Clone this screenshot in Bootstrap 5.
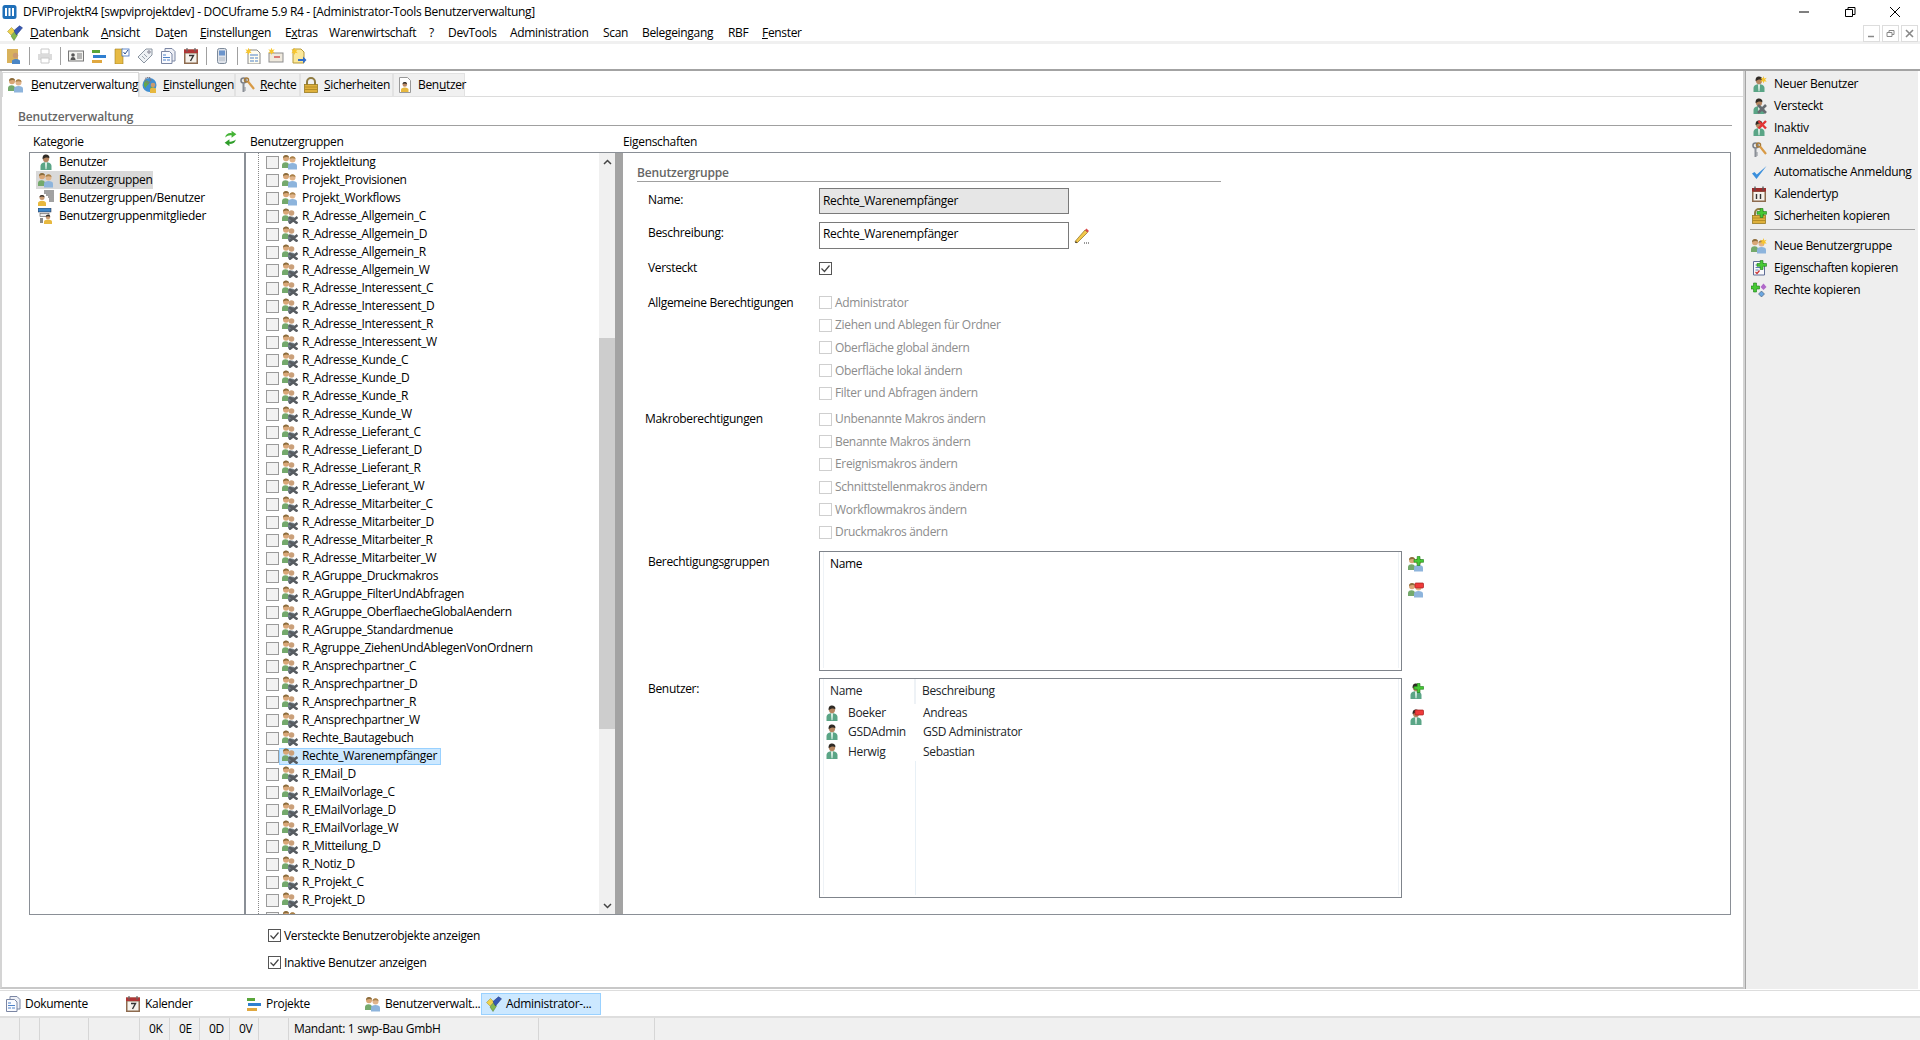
<!DOCTYPE html>
<html lang="de">
<head>
<meta charset="utf-8">
<title>DFViProjektR4</title>
<link href="https://cdn.jsdelivr.net/npm/bootstrap@5.3.0/dist/css/bootstrap.min.css" rel="stylesheet">
<style>
html,body{height:1040px;overflow:hidden;background:#fff}
body{font-family:"Open Sans","Liberation Sans",sans-serif;font-size:12px;line-height:16px;color:#000;letter-spacing:-.32px}
svg.ico{width:16px;height:16px;flex:none;display:block}
.app-win{height:1040px;width:1920px}
.ttl-bar{height:22px;padding-left:2px;padding-top:2px}
.ttl-bar .ttl-txt{margin-left:5px}
.ttl-btns{margin-left:auto;width:123px;justify-content:space-between;padding-right:18px}
.ttl-btns svg{width:14px;height:14px}
.mn-bar{height:19px;position:relative;padding-top:2px}
.mn-ico{width:30px;padding-left:7px}
.mn-items{display:grid;grid-template-columns:71px 54px 45px 85px 44px 100px 19px 62px 93px 39px 86px 34px auto;flex:1}
.mdi-btns{margin-left:auto;margin-right:2px;gap:2px;margin-top:2px}
.mdi-btns span{width:17px;height:17px;border:1px solid #ddd;display:flex;align-items:center;justify-content:center}
.mdi-btns svg{width:9px;height:9px}
.band-bar{height:3px;background:#f0f0f0}
.tool-bar{height:25px;padding-left:6px;padding-bottom:1px;gap:7px}
.tool-bar i{width:1px;height:18px;background:#a0a0a0;flex:none}
.tool-bar .fad{opacity:.35}
.rule-top{height:2px;background:#a3a3a3}
.work-row{height:918px}
.work-main{width:1745px;border-right:2px solid #d4d4d4;border-left:2px solid #d4d4d4;border-bottom:2px solid #c8c8c8}
.side-pane{width:173px;background:#eee;border-left:1px solid #a5a5a5;padding-top:2px}
.side-pane .list-group-item{background:transparent;border:0;padding:0 0 0 5px;height:22px;display:flex;align-items:center;gap:7px;color:#000}
.side-sep{height:1px;background:#a0a0a0;margin:2px 0 5px 4px;width:165px}
.tab-strip{height:26px;border-bottom:0;background:linear-gradient(#fff 1px,#fff 25px,#dcdcdc 25px);padding-top:1px;flex-wrap:nowrap}
.tab-strip .nav-link{color:#000;border-radius:0;padding:0 0 0 2px;height:24px;margin:1px 0 0;background:#f0f0f0;border:1px solid #e2e2e2;display:flex;align-items:center;gap:5px}
.tab-strip .nav-link.active{height:25px;margin-top:0;background:#fff;border-color:#d9d9d9 #d9d9d9 #fff;border-bottom:0;color:#000;padding-left:5px;gap:7px}
.tab-strip li:nth-child(1){width:137px}
.tab-strip li:nth-child(2){width:96px}
.tab-strip li:nth-child(3){width:65px}
.tab-strip li:nth-child(4){width:93px}
.tab-strip li:nth-child(5){width:72px}
.tab-strip li:nth-child(3) .nav-link,.tab-strip li:nth-child(5) .nav-link{padding-left:3px}
.page-pad{padding:0 11px 0 16px}
.hd-group{height:17px;margin-top:12px;border-bottom:1px solid #a0a0a0;color:#666;font-weight:600;line-height:15px;letter-spacing:-.15px}
.col-heads{height:26px;padding-left:15px;align-items:flex-end;padding-bottom:2px}
.col-heads span:nth-child(1){width:190px}
.col-heads svg{width:15px;height:17px;margin-right:12px;margin-bottom:3px}
.col-heads span:nth-child(3){width:373px}
.pane-row{height:763px;width:1702px;margin-left:27px;border:1px solid #8a8f96}
.cat-pane{width:216px;flex:none;border-right:2px solid #8a8f96;padding:0 0 0 6px}
.cat-item{height:18px;display:flex;align-items:center;gap:2px;width:117px}
.cat-item svg{margin:0 3px 0 2px}
.cat-item.sel{background:#d9d9d9}
.cat-item:nth-child(3),.cat-item:nth-child(4){width:180px}
.tree-pane{width:353px;overflow:hidden;position:relative;padding:0;margin:0;list-style:none;flex:none}
.tree-pane::before{content:"";position:absolute;left:12px;top:0;bottom:0;border-left:1px dotted #888}
.tr-row{height:18px;display:flex;align-items:center;padding-left:20px}
.tr-lbl{display:flex;align-items:center;height:17px;padding:0 3px 0 2px;gap:4px;border:1px solid transparent;white-space:nowrap}
.tr-row.sel .tr-lbl{background:#cce8ff;border-color:#99d1ff}
.scroll-v{width:16px;background:#f0f0f0;flex:none;display:flex;flex-direction:column}
.scroll-v b{height:17px;display:flex;align-items:center;justify-content:center;flex:none}
.scroll-v b svg{width:9px;height:6px}
.scroll-v em{display:block;height:392px;background:#cdcdcd;margin:168px 0 168px}
.split-v{width:8px;background:#a3a3a3;flex:none}
.prop-pane{flex:1;padding:0 0 0 14px;min-width:0}
.prop-hd{height:18px;margin-top:11px;width:584px;padding-top:2px;border-bottom:1px solid #a0a0a0;color:#666;font-weight:600;line-height:14px;letter-spacing:-.15px}
.form-check-input[type=checkbox]{border-radius:0;width:13px;height:13px;flex:none;margin:0;background-color:#f2f2f2;border:1px solid #9a9a9a;box-shadow:none}
.form-check-input[type=checkbox]:checked{background-color:#fff;border-color:#555;background-image:url("data:image/svg+xml,%3csvg xmlns='http://www.w3.org/2000/svg' viewBox='0 0 13 13'%3e%3cpath d='M2.500 6.500l3 3 5-6' fill='none' stroke='%23444' stroke-width='1.200'/%3e%3c/svg%3e");background-size:13px 13px}
.form-check-input[type=checkbox]:disabled{opacity:1;background-color:#fff;border-color:#cfcfcf}
.prop-row{display:grid;grid-template-columns:171px 1fr;padding-left:11px}
.in-name{margin-top:6px;height:26px}
.in-desc{margin-top:8px;height:27px}
.form-control.fld{border-radius:0;height:100%;width:250px;border:1px solid #7a7a7a;font-size:12px;padding:0 3px 5px;color:#000;background:#fff;box-shadow:none;line-height:16px;letter-spacing:-.32px}
.form-control.fld[readonly]{background:#e6e6e6;border-color:#7a7a7a;padding-bottom:1px}
.fld-wrap{display:flex;align-items:flex-start;gap:5px}
.fld-wrap svg{margin-top:6px}
.in-hid{margin-top:11px;height:14px;align-items:center}
.grp-a{margin-top:17.5px}
.grp-b{margin-top:3.500px}
.grp-b label.lb{margin-left:-3px}
.chk-ln{height:22.6px;display:flex;align-items:center;gap:3px;color:#8c8c8c}
.lb{padding-top:3px}
.in-name .lb{padding-top:4px}
.in-desc .lb{padding-top:3px}
.grp-a .lb{padding-top:0;margin-top:3px}
.box-a{margin-top:7px;height:120px}
.box-b{margin-top:7px;height:220px}
.box-inner{display:flex;gap:6px;height:100%}
.list-box{width:583px;height:100%;border:1px solid #7f848b;padding:0 2px 2px 3px}
.list-in{height:100%;border-left:1px solid #eef2f6;border-right:1px solid #eef2f6;display:flex;flex-direction:column}
.side-ico{display:flex;flex-direction:column;gap:10px;padding-top:5px}
.tb-users{width:auto;margin:0;--bs-table-bg:transparent;font-size:12px}
.tb-users th,.tb-users td{border:0;padding:0;font-weight:400;height:19.2px;line-height:16px;vertical-align:middle}
.tb-users th{height:25px;padding-left:6px}
.tb-users th.nm{width:91px}
.tb-users th+th{border-left:2px solid #eef2f6}
.tb-users td:first-child{width:91px;white-space:nowrap}
.tb-users td+td{padding-left:8px}
.tb-users td svg{display:inline-block;margin:-2px 8px 0 0;vertical-align:middle}
.col-line{flex:1;margin-left:91px;border-left:1px solid #e8f0f6}
.name-hd{padding:4px 0 0 6px}
.chk-opts{padding-left:266px;padding-top:7px}
.chk-opts div{height:27px;display:flex;align-items:center;gap:3px;color:#000}
.task-bar{height:26px;padding-top:2px;border-top:1px solid #ddd;margin-top:1px}
.task-bar div{height:22px;display:flex;align-items:center;gap:4px;padding-left:5px;flex:none}
.task-bar div:nth-child(1){width:120px}
.task-bar div:nth-child(2){width:121px}
.task-bar div:nth-child(3){width:119px}
.task-bar div:nth-child(4){width:121px}
.task-bar .act{width:120px;background:#cce8ff;border:1px solid #99d1ff;padding-left:4px}
.stat-bar{height:24px;background:#f0f0f0;border-top:2px solid #dedede;display:grid;grid-template-columns:20px 20px 49px 51px 30px 30px 30px 29px 30px 250px 116px 1fr}
.stat-bar span{border-right:1px solid #d6d6d6;display:flex;align-items:center;padding-left:9px;white-space:nowrap}
.stat-bar span.mand{padding-left:5px}
.stat-bar span.fill{border:0}
</style>
</head>
<body>
<svg width="0" height="0" class="d-none">
<symbol id="u" viewBox="0 0 16 16"><path d="M2.500 16v-4c0-2.300 2.300-3.800 5.500-3.800s5.500 1.500 5.500 3.800v4z" fill="#5aa586"/><path d="M7 8.200h2l-.5 7H7.500z" fill="#e6f5ee"/><ellipse cx="8" cy="4.600" rx="3.100" ry="3.700" fill="#b48560"/><path d="M4.700 5.200C4.200 1.800 6 .5 8 .5s3.800 1.300 3.400 3.700C10 3.200 7 3 4.700 5.200z" fill="#2f2a25"/></symbol>
<symbol id="gb" viewBox="0 0 16 16"><path d="M0 14v-3c0-1.700 1.300-2.800 3.500-2.800S7 9.300 7 11v3z" fill="#74a96c"/><circle cx="4" cy="4.300" r="3" fill="#d9a777"/><path d="M1 4C1 2 2.400 1 4 1s3 1 3 2.500C5 2.500 3 3 1 4z" fill="#8a6c3c"/><path d="M6 15.500v-3.800C6 10 7.800 9 10.500 9S15 10 15 11.700v3.800z" fill="#8db4dc"/><circle cx="10.500" cy="5.500" r="3" fill="#e0b48a"/><path d="M7.500 5C7.500 3.200 9 2.300 10.500 2.300S13.500 3.200 13.500 5c-2-1-4-1-6 0z" fill="#a98149"/></symbol>
<symbol id="gx" viewBox="0 0 16 16"><path d="M0 13v-3c0-1.700 1.300-2.800 3.500-2.800S7 8.300 7 10v3z" fill="#74a96c"/><circle cx="4" cy="3.800" r="3" fill="#d9a777"/><path d="M1 3.500C1 1.600 2.400.6 4 .6s3 1 3 2.400C5 2 3 2.500 1 3.500z" fill="#8a6c3c"/><path d="M6 14v-3C6 9.500 7.500 8.500 9.500 8.500s3.500 1 3.500 2.500v3z" fill="#6f7d86"/><circle cx="9.500" cy="5" r="2.800" fill="#caa07a"/><path d="M7 9l8.500 6.500M15.500 9L7 15.500" stroke="#565b60" stroke-width="2.600"/></symbol>
<symbol id="star" viewBox="0 0 16 16"><path d="M12.500 0l.8 2.400 2.400-.6-1.600 2 1.600 2-2.400-.6-.8 2.400-.8-2.400-2.400.6 1.600-2-1.600-2 2.400.6z" fill="#f7c52d"/></symbol>
<symbol id="plus" viewBox="0 0 16 16"><path d="M9.200.5h2.800v3h3.500v2.800H12v3.200H9.200V6.300H6V3.500h3.200z" fill="#46c934" stroke="#1d7a18" stroke-width=".6"/></symbol>
<symbol id="minus" viewBox="0 0 16 16"><rect x="7" y="1" width="8.500" height="5" rx=".8" fill="#ee3a3a" stroke="#a61c1c" stroke-width=".7"/></symbol>
<symbol id="redx" viewBox="0 0 16 16"><path d="M7.500 1l7.500 7.500M15 1L7.500 8.500" stroke="#e23434" stroke-width="2.400"/></symbol>
<symbol id="greyx" viewBox="0 0 16 16"><path d="M7 7l8 8M15 7l-8 8" stroke="#666b70" stroke-width="2.600"/></symbol>
<symbol id="keys" viewBox="0 0 16 16"><circle cx="4.500" cy="3.500" r="2.500" fill="none" stroke="#7b8088" stroke-width="1.600"/><path d="M4.500 6v9" stroke="#8a8f96" stroke-width="2"/><path d="M5 13h2M5 11h2" stroke="#8a8f96"/><circle cx="7.500" cy="3" r="2" fill="none" stroke="#a77a38" stroke-width="1.500"/><path d="M9 4.500l6 7.500" stroke="#d89a45" stroke-width="2.200"/></symbol>
<symbol id="chk" viewBox="0 0 16 16"><path d="M1 9.500L5.500 15 15.500 2 5.800 10.500l-2.300-2.500z" fill="#3b8fdc"/></symbol>
<symbol id="cal" viewBox="0 0 16 16"><rect x="1" y="2" width="14" height="14" fill="#8d6b4f"/><rect x="2.500" y="6" width="11" height="8.500" fill="#f5f2ec"/><rect x="1" y="2" width="14" height="3.500" fill="#9c2c2c"/><path d="M4 .5v4M12 .5v4" stroke="#555" stroke-width="1.300"/><path d="M5.500 8v5M9.500 8v5" fill="none" stroke="#333" stroke-width="1.400"/></symbol>
<symbol id="lock" viewBox="0 0 16 16"><path d="M4 8V5a4 4 0 0 1 8 0v3" fill="none" stroke="#8f7b40" stroke-width="2"/><rect x="1.500" y="7.500" width="13" height="8" fill="#dfb13c" stroke="#977a22" stroke-width=".8"/><path d="M2 10h12M2 12.500h12" stroke="#b58d25"/></symbol>
<symbol id="doc" viewBox="0 0 16 16"><path d="M2.500 1.500h8l3 3v10.500h-11z" fill="#f8f8fb" stroke="#5f6d96"/><path d="M4.500 5h5M4.500 7.500h7M4.500 10h3" stroke="#5f7fb8"/><path d="M4.500 12l1.500 1.500 2.500-3" stroke="#cc3333" fill="none" stroke-width="1.200"/></symbol>
<symbol id="dia" viewBox="0 0 16 16"><path d="M9.500 5l3-3.500 3 3.500-3 3z" fill="#b069c9"/><path d="M7.500 12l3-3 3 3-3 3z" fill="#6ba6e0" stroke="#345" stroke-width=".5"/></symbol>
<symbol id="adm" viewBox="0 0 16 16"><path d="M.5 6.500L4.500 2.500 8 6 4 10z" fill="#edd24a" stroke="#9c8a2c" stroke-width=".5"/><path d="M4 11l3.500-4 3 3-3.500 5.500z" fill="#86b84e" stroke="#4e7a28" stroke-width=".5"/><path d="M7 5.500L12.500.8l3 2-6 7.200z" fill="#3558b5" stroke="#1d3276" stroke-width=".5"/></symbol>
<symbol id="bars" viewBox="0 0 16 16"><rect x="1" y="2" width="8" height="3" fill="#5aa63a"/><rect x="2" y="7" width="13" height="3" fill="#2f7fd1"/><rect x="1" y="12" width="10" height="3" fill="#e0a840"/></symbol>
<symbol id="cal7" viewBox="0 0 16 16"><rect x="1" y="1.500" width="14" height="14.500" fill="#8d6b4f"/><rect x="2.500" y="5.500" width="11" height="9" fill="#f5f2ec"/><rect x="1" y="1.500" width="14" height="3.500" fill="#b03535"/><path d="M4 0v3.500M12 0v3.500" stroke="#666" stroke-width="1.200"/><path d="M6 7.500h4.500L7.500 13" fill="none" stroke="#333" stroke-width="1.400"/></symbol>
<symbol id="docs" viewBox="0 0 16 16"><path d="M5 .5h7l3 3V13H5z" fill="#eef0f6" stroke="#7b86a3"/><path d="M1.500 3.500h8l2.500 2.500v9.500H1.500z" fill="#fafbff" stroke="#7b86a3"/><path d="M3 7h3M3 9.500h7M3 12h3M7 12h3" stroke="#4e82c8"/></symbol>
<symbol id="gearp" viewBox="0 0 16 16"><circle cx="7.500" cy="8" r="7" fill="#3f8fd2"/><path d="M3 4c2-1 4 0 4 2s-3 2-3 5c-2-1-3-4-1-7zM9 9c2 0 3 1 2 3s-2 2-3 1z" fill="#63a84a"/><circle cx="6" cy="3" r="2.700" fill="none" stroke="#778" stroke-width="1.400" stroke-dasharray="1.300 .6"/><path d="M8 16v-3.500c0-1 1.200-2 3-2s3 1 3 2V16z" fill="#e7b83f"/><circle cx="11" cy="8" r="2.300" fill="#c99a70"/></symbol>
<symbol id="docp" viewBox="0 0 16 16"><path d="M2.500.5h8l3 3V15.500h-11z" fill="#fff" stroke="#999"/><path d="M4 15v-2.500c0-1 1.500-2 3.800-2s3.700 1 3.700 2V15z" fill="#e7b83f"/><circle cx="7.800" cy="7.500" r="2.300" fill="#b98a66"/><path d="M5.600 7C5.600 5.500 6.700 5 7.800 5S10 5.500 10 7c-1.500-.8-3-.8-4.400 0z" fill="#33302c"/></symbol>
<symbol id="listp" viewBox="0 0 16 16"><path d="M6 1h10M6 3h10M8 5h8M10 7h6M11 9h5M11 11h5" stroke="#444"/><path d="M0 16v-3c0-1.300 1.500-2.300 4-2.300S8 11.700 8 13v3z" fill="#e7b83f"/><circle cx="4" cy="7.500" r="2.500" fill="#c99a70"/><path d="M1.500 7.200C1.500 5.700 2.700 5 4 5s2.500.7 2.500 2.200c-1.700-.8-3.300-.8-5 0z" fill="#33302c"/></symbol>
<symbol id="treep" viewBox="0 0 16 16"><rect x="0" y="0" width="13" height="4" fill="#3c86c9" stroke="#223" stroke-width=".5"/><rect x="2" y="5.500" width="9" height="3" fill="#eee" stroke="#555" stroke-width=".6"/><path d="M2 10h3v5H2z" fill="#888"/><path d="M6 16v-2.500c0-1 1.500-2 4-2s4 1 4 2V16z" fill="#e7b83f"/><circle cx="10" cy="9" r="2.300" fill="#c99a70"/><path d="M7.800 8.700C7.800 7.400 8.800 6.800 10 6.800s2.200.6 2.200 1.900c-1.500-.7-2.900-.7-4.400 0z" fill="#33302c"/></symbol>
</svg>

<div class="app-win d-flex flex-column">
  <div class="ttl-bar d-flex align-items-center">
    <svg class="ico" viewBox="0 0 16 16"><rect x=".5" y="1" width="14" height="14" rx="2.500" fill="#1f6fb8"/><path d="M4 4v8M7.500 4v8M11 4v8" stroke="#fff" stroke-width="2"/></svg>
    <span class="ttl-txt">DFViProjektR4 [swpviprojektdev] - DOCUframe 5.9 R4 - [Administrator-Tools Benutzerverwaltung]</span>
    <div class="ttl-btns d-flex">
      <svg viewBox="0 0 14 14"><path d="M2 7h10" stroke="#000"/></svg>
      <svg viewBox="0 0 14 14"><path d="M2.500 4.500h7v7h-7zM5 4.500V2.500h7v7h-2.500" fill="none" stroke="#000"/></svg>
      <svg viewBox="0 0 14 14"><path d="M2 2l10 10M12 2L2 12" stroke="#000"/></svg>
    </div>
  </div>
  <nav class="mn-bar d-flex align-items-center">
    <div class="mn-ico"><svg class="ico"><use href="#adm"/></svg></div>
    <div class="mn-items">
      <span><u>D</u>atenbank</span><span><u>A</u>nsicht</span><span>Da<u>t</u>en</span><span><u>E</u>instellungen</span><span>E<u>x</u>tras</span><span>Warenwirtschaft</span><span>?</span><span>DevTools</span><span>Administration</span><span>Scan</span><span>Belegeingang</span><span>RBF</span><span><u>F</u>enster</span>
    </div>
    <div class="mdi-btns d-flex">
      <span><svg viewBox="0 0 9 9"><path d="M1 7.500h6" stroke="#888" stroke-width="1.500"/></svg></span>
      <span><svg viewBox="0 0 9 9"><path d="M1 3.500h5v4H1zM3 3.500V1.500h5v4H6" fill="none" stroke="#888"/></svg></span>
      <span><svg viewBox="0 0 9 9"><path d="M1 1l7 7M8 1L1 8" stroke="#888" stroke-width="1.600"/></svg></span>
    </div>
  </nav>
  <div class="band-bar"></div>
  <div class="tool-bar d-flex align-items-center">
    <svg class="ico" viewBox="0 0 16 16"><rect x="1" y="1" width="11" height="14" fill="#d9b25c"/><path d="M6 16v-3c0-1 1.500-2 4-2s4 1 4 2v3z" fill="#4b86c5"/><circle cx="9.500" cy="7.500" r="2.700" fill="#c99a70"/></svg>
    <i></i>
    <svg class="ico fad" viewBox="0 0 16 16"><path d="M4 1h8v5H4z" fill="#fff" stroke="#666"/><rect x="1" y="6" width="14" height="6" fill="#999"/><path d="M4 10h8v5H4z" fill="#fff" stroke="#666"/></svg>
    <i></i>
    <svg class="ico" viewBox="0 0 16 16"><rect x=".5" y="3" width="15" height="10" fill="#f3f3f0" stroke="#777"/><circle cx="5" cy="7" r="1.800" fill="#555"/><path d="M2.500 12c0-2 1-3 2.500-3s2.500 1 2.500 3z" fill="#555"/><path d="M9 6h5M9 8h5M9 10h5" stroke="#777"/></svg>
    <svg class="ico"><use href="#bars"/></svg>
    <svg class="ico" viewBox="0 0 16 16"><path d="M1 1h8v15H1z" fill="#e7bb45" stroke="#a17f20" stroke-width=".6"/><rect x="8" y="1" width="7" height="7" fill="#fff" stroke="#3f6fc0" stroke-width=".8"/><path d="M9.500 4l1.500 2 3-4" fill="none" stroke="#2a4f90" stroke-width="1"/></svg>
    <svg class="ico" viewBox="0 0 16 16"><path d="M1 9l8-8h6v6l-8 8z" fill="#eef1f4" stroke="#8a94a0"/><circle cx="12" cy="4" r="1.200" fill="#fff" stroke="#778"/><path d="M5 8l3 3M7 6l3 3" stroke="#9aa3ad"/></svg>
    <svg class="ico"><use href="#docs"/></svg>
    <svg class="ico"><use href="#cal7"/></svg>
    <i></i>
    <svg class="ico" viewBox="0 0 16 16"><rect x="3.500" y=".5" width="9" height="15" rx="2" fill="#dfe3ea" stroke="#7d8a9a"/><rect x="5" y="2.500" width="6" height="5" fill="#6c95cc"/><path d="M5.500 10h5M5.500 12h5" stroke="#7d8a9a" stroke-dasharray="1 1"/></svg>
    <i></i>
    <svg class="ico" viewBox="0 0 16 16"><path d="M3 2h9l3 3v11H3z" fill="#fffdf0" stroke="#888"/><path d="M5 7h8M5 10h4M10 10h3M5 13h4M10 13h3" stroke="#4e82c8" stroke-width="1.200"/><use href="#star" x="-9" y="-.5"/></svg>
    <svg class="ico" viewBox="0 0 16 16"><rect x="1" y="5" width="14" height="9" fill="#efe9dd" stroke="#8d8d8d"/><path d="M6 9h6" stroke="#c33" stroke-width="1.200"/><use href="#star" x="-9" y="-.5"/></svg>
    <svg class="ico" viewBox="0 0 16 16"><path d="M2 1h8l3 3v11H2z" fill="#fbe89a" stroke="#b79a3a"/><path d="M7 11h5V8.500l3.500 3.500-3.500 3.500V13H7z" fill="#2f6dcb"/><use href="#star" x="-9" y="-.5"/></svg>
  </div>
  <div class="rule-top"></div>

  <div class="work-row d-flex">
    <main class="work-main d-flex flex-column">
      <ul class="nav nav-tabs tab-strip">
        <li class="nav-item"><a class="nav-link active" href="#"><svg class="ico"><use href="#gb"/></svg><span><u>B</u>enutzerverwaltung</span></a></li>
        <li class="nav-item"><a class="nav-link" href="#"><svg class="ico"><use href="#gearp"/></svg><span><u>E</u>instellungen</span></a></li>
        <li class="nav-item"><a class="nav-link" href="#"><svg class="ico"><use href="#keys"/></svg><span><u>R</u>echte</span></a></li>
        <li class="nav-item"><a class="nav-link" href="#"><svg class="ico"><use href="#lock"/></svg><span><u>S</u>icherheiten</span></a></li>
        <li class="nav-item"><a class="nav-link" href="#"><svg class="ico"><use href="#docp"/></svg><span>Ben<u>u</u>tzer</span></a></li>
      </ul>
      <div class="page-pad">
        <div class="hd-group">Benutzerverwaltung</div>
        <div class="col-heads d-flex">
          <span>Kategorie</span>
          <svg viewBox="0 0 14 16"><path d="M2 7c.5-3 3-4.500 6-4V.8L12.500 4 8 7.200V5C6 4.700 4 5.500 2 7z" fill="#45b437"/><path d="M12 9c-.5 3-3 4.500-6 4v2.200L1.500 12 6 8.800V11c2 .3 4-.5 6-2z" fill="#2f9e2a"/></svg>
          <span>Benutzergruppen</span>
          <span>Eigenschaften</span>
        </div>
      </div>
      <div class="pane-row d-flex">
        <div class="cat-pane">
          <div class="cat-item"><svg class="ico"><use href="#u"/></svg><span>Benutzer</span></div>
          <div class="cat-item sel"><svg class="ico"><use href="#gb"/></svg><span>Benutzergruppen</span></div>
          <div class="cat-item"><svg class="ico"><use href="#listp"/></svg><span>Benutzergruppen/Benutzer</span></div>
          <div class="cat-item"><svg class="ico"><use href="#treep"/></svg><span>Benutzergruppenmitglieder</span></div>
        </div>
        <ul class="tree-pane">
          <li class="tr-row"><input class="form-check-input" type="checkbox"><span class="tr-lbl"><svg class="ico"><use href="#gb"/></svg><span>Projektleitung</span></span></li>
          <li class="tr-row"><input class="form-check-input" type="checkbox"><span class="tr-lbl"><svg class="ico"><use href="#gb"/></svg><span>Projekt_Provisionen</span></span></li>
          <li class="tr-row"><input class="form-check-input" type="checkbox"><span class="tr-lbl"><svg class="ico"><use href="#gb"/></svg><span>Projekt_Workflows</span></span></li>
          <li class="tr-row"><input class="form-check-input" type="checkbox"><span class="tr-lbl"><svg class="ico"><use href="#gx"/></svg><span>R_Adresse_Allgemein_C</span></span></li>
          <li class="tr-row"><input class="form-check-input" type="checkbox"><span class="tr-lbl"><svg class="ico"><use href="#gx"/></svg><span>R_Adresse_Allgemein_D</span></span></li>
          <li class="tr-row"><input class="form-check-input" type="checkbox"><span class="tr-lbl"><svg class="ico"><use href="#gx"/></svg><span>R_Adresse_Allgemein_R</span></span></li>
          <li class="tr-row"><input class="form-check-input" type="checkbox"><span class="tr-lbl"><svg class="ico"><use href="#gx"/></svg><span>R_Adresse_Allgemein_W</span></span></li>
          <li class="tr-row"><input class="form-check-input" type="checkbox"><span class="tr-lbl"><svg class="ico"><use href="#gx"/></svg><span>R_Adresse_Interessent_C</span></span></li>
          <li class="tr-row"><input class="form-check-input" type="checkbox"><span class="tr-lbl"><svg class="ico"><use href="#gx"/></svg><span>R_Adresse_Interessent_D</span></span></li>
          <li class="tr-row"><input class="form-check-input" type="checkbox"><span class="tr-lbl"><svg class="ico"><use href="#gx"/></svg><span>R_Adresse_Interessent_R</span></span></li>
          <li class="tr-row"><input class="form-check-input" type="checkbox"><span class="tr-lbl"><svg class="ico"><use href="#gx"/></svg><span>R_Adresse_Interessent_W</span></span></li>
          <li class="tr-row"><input class="form-check-input" type="checkbox"><span class="tr-lbl"><svg class="ico"><use href="#gx"/></svg><span>R_Adresse_Kunde_C</span></span></li>
          <li class="tr-row"><input class="form-check-input" type="checkbox"><span class="tr-lbl"><svg class="ico"><use href="#gx"/></svg><span>R_Adresse_Kunde_D</span></span></li>
          <li class="tr-row"><input class="form-check-input" type="checkbox"><span class="tr-lbl"><svg class="ico"><use href="#gx"/></svg><span>R_Adresse_Kunde_R</span></span></li>
          <li class="tr-row"><input class="form-check-input" type="checkbox"><span class="tr-lbl"><svg class="ico"><use href="#gx"/></svg><span>R_Adresse_Kunde_W</span></span></li>
          <li class="tr-row"><input class="form-check-input" type="checkbox"><span class="tr-lbl"><svg class="ico"><use href="#gx"/></svg><span>R_Adresse_Lieferant_C</span></span></li>
          <li class="tr-row"><input class="form-check-input" type="checkbox"><span class="tr-lbl"><svg class="ico"><use href="#gx"/></svg><span>R_Adresse_Lieferant_D</span></span></li>
          <li class="tr-row"><input class="form-check-input" type="checkbox"><span class="tr-lbl"><svg class="ico"><use href="#gx"/></svg><span>R_Adresse_Lieferant_R</span></span></li>
          <li class="tr-row"><input class="form-check-input" type="checkbox"><span class="tr-lbl"><svg class="ico"><use href="#gx"/></svg><span>R_Adresse_Lieferant_W</span></span></li>
          <li class="tr-row"><input class="form-check-input" type="checkbox"><span class="tr-lbl"><svg class="ico"><use href="#gx"/></svg><span>R_Adresse_Mitarbeiter_C</span></span></li>
          <li class="tr-row"><input class="form-check-input" type="checkbox"><span class="tr-lbl"><svg class="ico"><use href="#gx"/></svg><span>R_Adresse_Mitarbeiter_D</span></span></li>
          <li class="tr-row"><input class="form-check-input" type="checkbox"><span class="tr-lbl"><svg class="ico"><use href="#gx"/></svg><span>R_Adresse_Mitarbeiter_R</span></span></li>
          <li class="tr-row"><input class="form-check-input" type="checkbox"><span class="tr-lbl"><svg class="ico"><use href="#gx"/></svg><span>R_Adresse_Mitarbeiter_W</span></span></li>
          <li class="tr-row"><input class="form-check-input" type="checkbox"><span class="tr-lbl"><svg class="ico"><use href="#gx"/></svg><span>R_AGruppe_Druckmakros</span></span></li>
          <li class="tr-row"><input class="form-check-input" type="checkbox"><span class="tr-lbl"><svg class="ico"><use href="#gx"/></svg><span>R_AGruppe_FilterUndAbfragen</span></span></li>
          <li class="tr-row"><input class="form-check-input" type="checkbox"><span class="tr-lbl"><svg class="ico"><use href="#gx"/></svg><span>R_AGruppe_OberflaecheGlobalAendern</span></span></li>
          <li class="tr-row"><input class="form-check-input" type="checkbox"><span class="tr-lbl"><svg class="ico"><use href="#gx"/></svg><span>R_AGruppe_Standardmenue</span></span></li>
          <li class="tr-row"><input class="form-check-input" type="checkbox"><span class="tr-lbl"><svg class="ico"><use href="#gx"/></svg><span>R_Agruppe_ZiehenUndAblegenVonOrdnern</span></span></li>
          <li class="tr-row"><input class="form-check-input" type="checkbox"><span class="tr-lbl"><svg class="ico"><use href="#gx"/></svg><span>R_Ansprechpartner_C</span></span></li>
          <li class="tr-row"><input class="form-check-input" type="checkbox"><span class="tr-lbl"><svg class="ico"><use href="#gx"/></svg><span>R_Ansprechpartner_D</span></span></li>
          <li class="tr-row"><input class="form-check-input" type="checkbox"><span class="tr-lbl"><svg class="ico"><use href="#gx"/></svg><span>R_Ansprechpartner_R</span></span></li>
          <li class="tr-row"><input class="form-check-input" type="checkbox"><span class="tr-lbl"><svg class="ico"><use href="#gx"/></svg><span>R_Ansprechpartner_W</span></span></li>
          <li class="tr-row"><input class="form-check-input" type="checkbox"><span class="tr-lbl"><svg class="ico"><use href="#gx"/></svg><span>Rechte_Bautagebuch</span></span></li>
          <li class="tr-row sel"><input class="form-check-input" type="checkbox"><span class="tr-lbl"><svg class="ico"><use href="#gx"/></svg><span>Rechte_Warenempfänger</span></span></li>
          <li class="tr-row"><input class="form-check-input" type="checkbox"><span class="tr-lbl"><svg class="ico"><use href="#gx"/></svg><span>R_EMail_D</span></span></li>
          <li class="tr-row"><input class="form-check-input" type="checkbox"><span class="tr-lbl"><svg class="ico"><use href="#gx"/></svg><span>R_EMailVorlage_C</span></span></li>
          <li class="tr-row"><input class="form-check-input" type="checkbox"><span class="tr-lbl"><svg class="ico"><use href="#gx"/></svg><span>R_EMailVorlage_D</span></span></li>
          <li class="tr-row"><input class="form-check-input" type="checkbox"><span class="tr-lbl"><svg class="ico"><use href="#gx"/></svg><span>R_EMailVorlage_W</span></span></li>
          <li class="tr-row"><input class="form-check-input" type="checkbox"><span class="tr-lbl"><svg class="ico"><use href="#gx"/></svg><span>R_Mitteilung_D</span></span></li>
          <li class="tr-row"><input class="form-check-input" type="checkbox"><span class="tr-lbl"><svg class="ico"><use href="#gx"/></svg><span>R_Notiz_D</span></span></li>
          <li class="tr-row"><input class="form-check-input" type="checkbox"><span class="tr-lbl"><svg class="ico"><use href="#gx"/></svg><span>R_Projekt_C</span></span></li>
          <li class="tr-row"><input class="form-check-input" type="checkbox"><span class="tr-lbl"><svg class="ico"><use href="#gx"/></svg><span>R_Projekt_D</span></span></li>
          <li class="tr-row"><input class="form-check-input" type="checkbox"><span class="tr-lbl"><svg class="ico"><use href="#gb"/></svg></span></li>
        </ul>
        <div class="scroll-v">
          <b><svg viewBox="0 0 9 6"><path d="M1 5l3.500-3.500L8 5" fill="none" stroke="#444" stroke-width="1.500"/></svg></b>
          <em></em>
          <b><svg viewBox="0 0 9 6"><path d="M1 1l3.500 3.500L8 1" fill="none" stroke="#444" stroke-width="1.500"/></svg></b>
        </div>
        <div class="split-v"></div>
        <section class="prop-pane">
          <div class="prop-hd">Benutzergruppe</div>
          <div class="prop-row in-name"><label class="lb">Name:</label><div class="fld-wrap"><input class="form-control fld" readonly value="Rechte_Warenempfänger"></div></div>
          <div class="prop-row in-desc"><label class="lb">Beschreibung:</label><div class="fld-wrap"><input class="form-control fld" value="Rechte_Warenempfänger"><svg class="ico" viewBox="0 0 16 16"><path d="M1 13.500L11 2l2.500 2.500L3 15z" fill="#f3c84a" stroke="#8a6d22" stroke-width=".7"/><path d="M11 2l1.500-1.500 2.500 2.500-1.500 1.500z" fill="#d84a4a"/><path d="M1 15l1-2 1 2z" fill="#333"/><path d="M10 15h1M12 15h1M14 15h1" stroke="#333"/></svg></div></div>
          <div class="prop-row in-hid"><label>Versteckt</label><div class="d-flex"><input class="form-check-input" type="checkbox" checked></div></div>
          <div class="prop-row grp-a"><label class="lb">Allgemeine Berechtigungen</label><div>
            <div class="chk-ln"><input class="form-check-input" type="checkbox" disabled><span>Administrator</span></div>
            <div class="chk-ln"><input class="form-check-input" type="checkbox" disabled><span>Ziehen und Ablegen für Ordner</span></div>
            <div class="chk-ln"><input class="form-check-input" type="checkbox" disabled><span>Oberfläche global ändern</span></div>
            <div class="chk-ln"><input class="form-check-input" type="checkbox" disabled><span>Oberfläche lokal ändern</span></div>
            <div class="chk-ln"><input class="form-check-input" type="checkbox" disabled><span>Filter und Abfragen ändern</span></div>
          </div></div>
          <div class="prop-row grp-a grp-b"><label class="lb">Makroberechtigungen</label><div>
            <div class="chk-ln"><input class="form-check-input" type="checkbox" disabled><span>Unbenannte Makros ändern</span></div>
            <div class="chk-ln"><input class="form-check-input" type="checkbox" disabled><span>Benannte Makros ändern</span></div>
            <div class="chk-ln"><input class="form-check-input" type="checkbox" disabled><span>Ereignismakros ändern</span></div>
            <div class="chk-ln"><input class="form-check-input" type="checkbox" disabled><span>Schnittstellenmakros ändern</span></div>
            <div class="chk-ln"><input class="form-check-input" type="checkbox" disabled><span>Workflowmakros ändern</span></div>
            <div class="chk-ln"><input class="form-check-input" type="checkbox" disabled><span>Druckmakros ändern</span></div>
          </div></div>
          <div class="prop-row box-a"><label class="lb">Berechtigungsgruppen</label><div class="box-inner">
            <div class="list-box"><div class="list-in"><div class="name-hd">Name</div></div></div>
            <div class="side-ico">
              <svg class="ico" viewBox="0 0 16 16"><use href="#gb"/><use href="#plus"/></svg>
              <svg class="ico" viewBox="0 0 16 16"><use href="#gb"/><use href="#minus"/></svg>
            </div>
          </div></div>
          <div class="prop-row box-b"><label class="lb">Benutzer:</label><div class="box-inner">
            <div class="list-box"><div class="list-in">
              <table class="table tb-users">
                <thead><tr><th class="nm">Name</th><th>Beschreibung</th></tr></thead>
                <tbody>
                  <tr><td><svg class="ico"><use href="#u"/></svg>Boeker</td><td>Andreas</td></tr>
                  <tr><td><svg class="ico"><use href="#u"/></svg>GSDAdmin</td><td>GSD Administrator</td></tr>
                  <tr><td><svg class="ico"><use href="#u"/></svg>Herwig</td><td>Sebastian</td></tr>
                </tbody>
              </table>
              <div class="col-line"></div>
            </div></div>
            <div class="side-ico">
              <svg class="ico" viewBox="0 0 16 16"><use href="#u"/><use href="#plus"/></svg>
              <svg class="ico" viewBox="0 0 16 16"><use href="#u"/><use href="#minus"/></svg>
            </div>
          </div></div>
        </section>
      </div>
      <div class="chk-opts">
        <div><input class="form-check-input" type="checkbox" checked><span>Versteckte Benutzerobjekte anzeigen</span></div>
        <div><input class="form-check-input" type="checkbox" checked><span>Inaktive Benutzer anzeigen</span></div>
      </div>
    </main>
    <aside class="side-pane list-group list-group-flush">
      <a class="list-group-item" href="#"><svg class="ico" viewBox="0 0 16 16"><use href="#u"/><use href="#star"/></svg><span>Neuer Benutzer</span></a>
      <a class="list-group-item" href="#"><svg class="ico" viewBox="0 0 16 16"><use href="#u"/><use href="#greyx"/></svg><span>Versteckt</span></a>
      <a class="list-group-item" href="#"><svg class="ico" viewBox="0 0 16 16"><use href="#u"/><use href="#redx"/></svg><span>Inaktiv</span></a>
      <a class="list-group-item" href="#"><svg class="ico"><use href="#keys"/></svg><span>Anmeldedomäne</span></a>
      <a class="list-group-item" href="#"><svg class="ico"><use href="#chk"/></svg><span>Automatische Anmeldung</span></a>
      <a class="list-group-item" href="#"><svg class="ico"><use href="#cal"/></svg><span>Kalendertyp</span></a>
      <a class="list-group-item" href="#"><svg class="ico" viewBox="0 0 16 16"><use href="#lock"/><use href="#plus"/></svg><span>Sicherheiten kopieren</span></a>
      <div class="side-sep"></div>
      <a class="list-group-item" href="#"><svg class="ico" viewBox="0 0 16 16"><use href="#gb"/><use href="#star"/></svg><span>Neue Benutzergruppe</span></a>
      <a class="list-group-item" href="#"><svg class="ico" viewBox="0 0 16 16"><use href="#doc"/><use href="#plus"/></svg><span>Eigenschaften kopieren</span></a>
      <a class="list-group-item" href="#"><svg class="ico" viewBox="0 0 16 16"><use href="#dia"/><path d="M2.500 1h3v3h3v3h-3v3h-3V7h-2.500V4h2.500z" fill="#46c934" stroke="#1d7a18" stroke-width=".6"/></svg><span>Rechte kopieren</span></a>
    </aside>
  </div>

  <div class="task-bar d-flex">
    <div><svg class="ico"><use href="#docs"/></svg><span>Dokumente</span></div>
    <div><svg class="ico"><use href="#cal7"/></svg><span>Kalender</span></div>
    <div><svg class="ico"><use href="#bars"/></svg><span>Projekte</span></div>
    <div><svg class="ico"><use href="#gb"/></svg><span>Benutzerverwalt...</span></div>
    <div class="act"><svg class="ico"><use href="#adm"/></svg><span>Administrator-...</span></div>
  </div>
  <div class="stat-bar">
    <span></span><span></span><span></span><span></span><span>0K</span><span>0E</span><span>0D</span><span>0V</span><span></span><span class="mand">Mandant: 1 swp-Bau GmbH</span><span></span><span class="fill"></span>
  </div>
</div>
</body>
</html>
